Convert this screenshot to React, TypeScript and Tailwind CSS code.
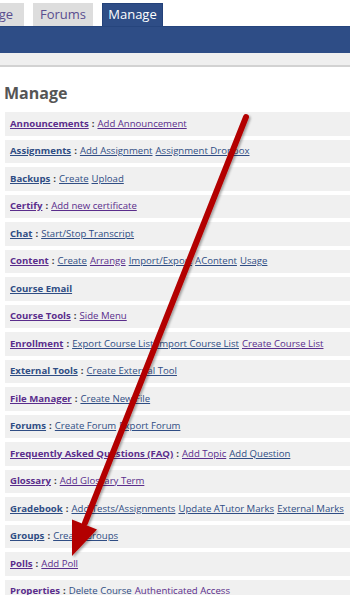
import React from 'react'

type Lnk = { t: string; v?: boolean; plain?: boolean }
type Row = { label: string; v?: boolean; links: Lnk[]; plain?: boolean }

const ROWS: Row[] = [
  { label: 'Announcements', v: true, links: [{ t: 'Add Announcement', v: true }] },
  { label: 'Assignments', links: [{ t: 'Add Assignment' }, { t: 'Assignment Dropbox' }] },
  { label: 'Backups', links: [{ t: 'Create' }, { t: 'Upload' }] },
  { label: 'Certify', v: true, links: [{ t: 'Add new certificate', v: true }] },
  { label: 'Chat', links: [{ t: 'Start/Stop Transcript' }] },
  {
    label: 'Content',
    v: true,
    links: [{ t: 'Create' }, { t: 'Arrange', v: true }, { t: 'Import/Export' }, { t: 'AContent' }, { t: 'Usage' }],
  },
  { label: 'Course Email', links: [] },
  { label: 'Course Tools', v: true, links: [{ t: 'Side Menu', v: true }] },
  {
    label: 'Enrollment',
    v: true,
    links: [{ t: 'Export Course List' }, { t: 'Import Course List' }, { t: 'Create Course List', v: true }],
  },
  { label: 'External Tools', links: [{ t: 'Create External Tool' }] },
  { label: 'File Manager', v: true, links: [{ t: 'Create New File' }] },
  { label: 'Forums', links: [{ t: 'Create Forum' }, { t: 'Export Forum' }] },
  {
    label: 'Frequently Asked Questions (FAQ)',
    v: true,
    links: [{ t: 'Add Topic', v: true }, { t: 'Add Question' }],
  },
  { label: 'Glossary', v: true, links: [{ t: 'Add Glossary Term', v: true }] },
  {
    label: 'Gradebook',
    links: [{ t: 'Add Tests/Assignments' }, { t: 'Update ATutor Marks' }, { t: 'External Marks' }],
  },
  { label: 'Groups', links: [{ t: 'Create Groups' }] },
  { label: 'Polls', v: true, links: [{ t: 'Add Poll', v: true }] },
  {
    label: 'Properties',
    v: true,
    plain: true,
    links: [{ t: 'Delete Course', plain: true }, { t: 'Authenticated Access', v: true, plain: true }],
  },
]

function linkColor(v?: boolean) {
  return v ? 'text-[#5a2d8c]' : 'text-[#2f4d84]'
}

function Arrow() {
  return (
    <svg className="pointer-events-none absolute left-0 top-0" width="350" height="595" viewBox="0 0 350 595">
      <defs>
        <filter id="sh" x="-20%" y="-20%" width="140%" height="140%">
          <feDropShadow dx="1.5" dy="1.5" stdDeviation="1.2" floodColor="#000" floodOpacity="0.35" />
        </filter>
      </defs>
      <g filter="url(#sh)">
        <line x1="246" y1="117" x2="85" y2="523" stroke="#b30000" strokeWidth="6" strokeLinecap="round" />
        <polygon points="72,556 72,519.5 97,529.5" fill="#b30000" />
      </g>
    </svg>
  )
}

export default function App() {
  return (
    <div className="relative h-[595px] w-[350px] overflow-hidden bg-white font-['Open_Sans',sans-serif]">
      <div className="flex h-[26px] items-end gap-[9px] pt-[3px]">
        <div className="flex h-[23px] w-[24px] items-center justify-end overflow-hidden bg-[#dddddd] pr-[11px] text-[13px] text-[#5a4d8f]">
          ge
        </div>
        <div className="flex h-[23px] w-[60px] items-center justify-center bg-[#dddddd] text-[13px] text-[#5a4d8f]">
          Forums
        </div>
        <div className="flex h-[23px] w-[61px] items-center justify-center border-x border-t border-[#24427a] bg-[#2e4d86] text-[13px] text-white">
          Manage
        </div>
      </div>
      <div className="h-[27px] border-t border-[#26457d] bg-[#2e4d86]" />
      <div className="h-[14px] border-b-2 border-[#d2d2d2] bg-[#efefef]" />

      <h1 className="mt-[15px] pl-[4px] text-[16px] font-bold leading-[22px] text-[#555555]">Manage</h1>

      <div className="mt-[8px] flex flex-col gap-[4px] pl-[5px]">
        {ROWS.map((r) => (
          <div
            key={r.label}
            className="flex h-[23.5px] items-center overflow-hidden whitespace-nowrap bg-[#f0f0f0] pl-[5px] text-[9.6px]"
          >
            <span className={`font-bold ${r.plain ? '' : 'underline'} ${linkColor(r.v)}`}>{r.label}</span>
            {r.links.length > 0 && <span className="px-[3px] font-bold text-[#333333]">:</span>}
            <span className="flex gap-[3px]">
              {r.links.map((l) => (
                <span key={l.t} className={`${l.plain ? '' : 'underline'} ${linkColor(l.v)}`}>
                  {l.t}
                </span>
              ))}
            </span>
          </div>
        ))}
      </div>

      <Arrow />
    </div>
  )
}
